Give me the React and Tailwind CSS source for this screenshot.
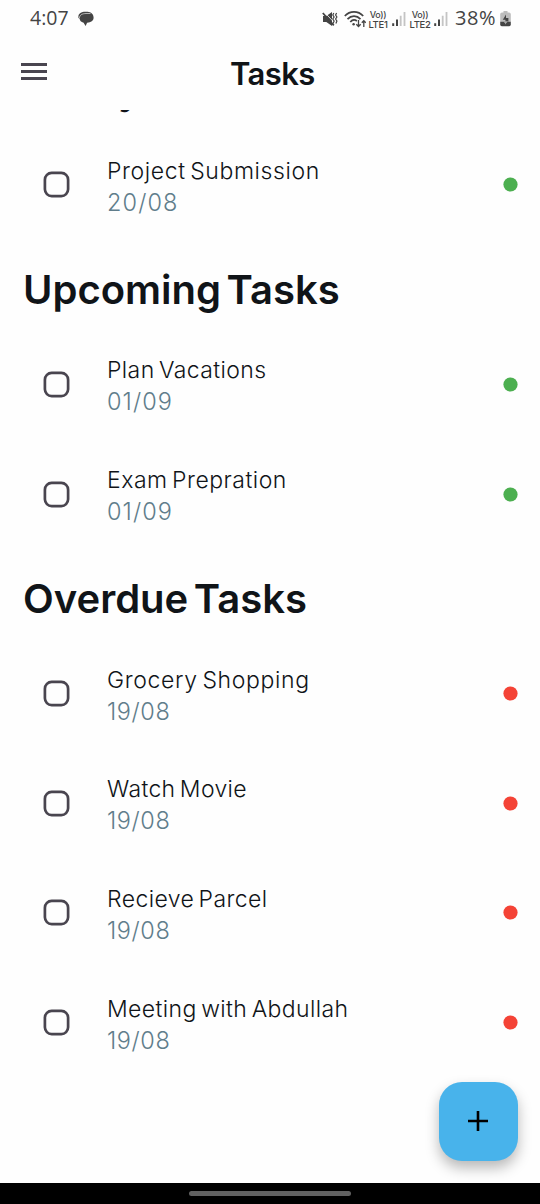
const upcoming = [
  { title: 'Plan Vacations', date: '01/09', tracking: 'tracking-[0.4px]', dateTracking: 'tracking-[1.1px]' },
  { title: 'Exam Prepration', date: '01/09', tracking: 'tracking-[0.5px]', dateTracking: 'tracking-[1.1px]' },
];

const overdue = [
  { title: 'Grocery Shopping', date: '19/08', tracking: 'tracking-[0.65px]', dateTracking: 'tracking-[0.6px]' },
  { title: 'Watch Movie', date: '19/08', tracking: 'tracking-[0.35px]', dateTracking: 'tracking-[0.6px]' },
  { title: 'Recieve Parcel', date: '19/08', tracking: 'tracking-[0.4px]', dateTracking: 'tracking-[0.6px]' },
  { title: 'Meeting with Abdullah', date: '19/08', tracking: 'tracking-[0.4px]', dateTracking: 'tracking-[0.6px]' },
];

function Heading({ children }) {
  return (
    <h2 className="flex h-[89.9px] shrink-0 items-center whitespace-nowrap pl-[23px] pt-[11px] text-[40px] font-semibold leading-none text-[#101418] [word-spacing:-4.5px]">
      {children}
    </h2>
  );
}

function Task({ title, date, tracking, dateTracking, dot }) {
  return (
    <li className="flex h-[109.7px] shrink-0 items-center pl-[43px] pr-[22.5px]">
      <svg className="size-[27px] shrink-0" viewBox="0 0 27 27" fill="none">
        <rect x="1.9" y="1.9" width="23.2" height="23.2" rx="6.8" stroke="#49454f" strokeWidth="2.7" />
      </svg>
      <div className="ml-[37px] flex-1 whitespace-nowrap pt-[4px] text-[23px] font-light leading-[31px]">
        <p className={`text-[#101418] [word-spacing:-2.5px] ${tracking}`}>{title}</p>
        <p className={`text-[23.5px] text-[#607d8b] ${dateTracking}`}>{date}</p>
      </div>
      <svg className="size-[15px] shrink-0" viewBox="0 0 15 15">
        <circle cx="7.5" cy="7.5" r="7.1" className={dot} />
      </svg>
    </li>
  );
}

function Muted() {
  return (
    <svg className="h-[16px] w-[16px]" viewBox="0 0 16 16" fill="none">
      <path d="M1 5h3.3L10 1v14L4.3 11H1z" fill="#444" />
      <path d="M2.6 1.4l9 9.5" stroke="#fefefe" strokeWidth=".8" />
      <path d="M.8 2l11 12.3" stroke="#444" strokeWidth="1.8" />
      <path d="M11.8 2l-1 2 1.3 2-1.3 2 1.3 2-1 2.5M14.6 2l-1 2 1.3 2-1.3 2 1.3 2-1 2.5" stroke="#444" strokeWidth="1.2" />
    </svg>
  );
}

function Wifi() {
  return (
    <svg className="h-[18px] w-[22px]" viewBox="0 0 22 18" fill="none" stroke="#444">
      <path d="M.8 6c5-5.6 13.4-5.6 18.4 0M3.5 9.2c3.8-4 9.2-4 13 0M6.3 12c2-2.3 4.6-2.4 6.6-1" strokeWidth="1.7" />
      <circle cx="9.6" cy="14.2" r="1.2" fill="#444" stroke="none" />
      <path d="M14.5 10v6.2M12.3 14.2l2.2 2.3 2.2-2.3M19.8 17v-6.2M17.8 12.8l2-2.2 2 2.2" strokeWidth="1.3" />
    </svg>
  );
}

function Carrier({ label }) {
  return (
    <span className="flex w-[20px] flex-col items-center gap-[1px] whitespace-nowrap text-[9.5px] font-medium leading-[9px] text-[#444]">
      <span className="text-[9px] tracking-[-0.4px]">Vo))</span>
      <span className="tracking-[-0.3px]">{label}</span>
    </span>
  );
}

function Signal() {
  return (
    <svg className="h-[16px] w-[14px]" viewBox="0 0 14 16">
      <path d="M.2 12.2h2V15h-2zM4 8.5h2V15H4z" fill="#444" />
      <path d="M7.8 4.8h1.8V15H7.8zM11.6 1h1.8v14h-1.8z" fill="#c4c4c4" />
    </svg>
  );
}

function Battery() {
  return (
    <svg className="h-[16px] w-[11px]" viewBox="0 0 11 16">
      <path d="M3.5 0h4v1.5H9A1.8 1.8 0 0 1 10.8 3.3V10H.2V3.3A1.8 1.8 0 0 1 2 1.5h1.5z" fill="#bdbdbd" />
      <path d="M.2 10.5h10.6v3.1a1.6 1.6 0 0 1-1.6 1.6H1.8A1.6 1.6 0 0 1 .2 13.6z" fill="#444" />
      <path d="M6 3.5L2.8 8.7h2.6v1.8h3V7H6z" fill="#444" />
      <path d="M4.2 10.5h3.6L5 13.5v-1.7H4z" fill="#aaa" />
    </svg>
  );
}

export default function App() {
  return (
    <div className="relative flex h-[1204px] w-[540px] flex-col overflow-hidden bg-[#fefefe] font-['Inter',sans-serif]">
      <div className="flex h-[38px] shrink-0 items-center pl-[30px] pr-[29px] text-[#444]">
        <span className="w-[48px] whitespace-nowrap pb-[2px] font-['Open_Sans',sans-serif] text-[19.5px] leading-none">4:07</span>
        <svg className="h-[16px] w-[16px]" viewBox="0 0 16 16">
          <path d="M.4 5.8C.4 2.4 3.4 .8 7.4 .8h2.2C13 .9 15.6 3.4 15.6 6.6c0 3.2-2.7 5-6.5 5.2L7.6 15l-2-3.2C3 11.2 1.8 9.6 1.6 7.6L.4 7z" fill="#444" />
          <path d="M1.4 7C1.6 4 4.2 2.6 8 2.5h4.5" fill="none" stroke="#fefefe" strokeWidth=".6" />
        </svg>
        <div className="ml-auto flex items-center">
          <Muted />
          <span className="ml-[6px] flex"><Wifi /></span>
          <span className="ml-[2px] flex"><Carrier label="LTE1" /></span>
          <span className="ml-[4px] flex"><Signal /></span>
          <span className="ml-[4px] flex"><Carrier label="LTE2" /></span>
          <span className="ml-[4px] flex"><Signal /></span>
          <span className="ml-[7px] w-[42px] whitespace-nowrap pb-[2px] font-['Open_Sans',sans-serif] text-[20px] leading-none tracking-[0.6px]">38%</span>
          <span className="ml-[3px] flex"><Battery /></span>
        </div>
      </div>

      <header className="flex h-[72px] shrink-0 items-start pl-[21px]">
        <div className="mt-[25px] flex w-[26px] flex-col gap-[4.2px]">
          <span className="h-[2.8px] bg-[#49454f]" />
          <span className="h-[2.8px] bg-[#49454f]" />
          <span className="h-[2.8px] bg-[#49454f]" />
        </div>
        <h1 className="ml-[183px] mt-[20px] whitespace-nowrap text-[31px] font-semibold leading-[31px] tracking-[-0.6px] text-[#101418]">Tasks</h1>
      </header>

      <main className="flex min-h-0 flex-1 flex-col overflow-hidden">
        <div className="-mt-[70px] flex flex-col">
          <Heading>Today Tasks</Heading>
          <ul>
            <Task title="Project Submission" date="20/08" tracking="tracking-[0.6px]" dateTracking="tracking-[1.1px]" dot="fill-[#4caf50]" />
          </ul>
          <Heading>Upcoming Tasks</Heading>
          <ul>{upcoming.map((t) => <Task key={t.title} {...t} dot="fill-[#4caf50]" />)}</ul>
          <Heading>Overdue Tasks</Heading>
          <ul>{overdue.map((t) => <Task key={t.title} {...t} dot="fill-[#f44336]" />)}</ul>
        </div>
      </main>

      <button aria-label="Add task" className="absolute right-[22.5px] top-[1081.5px] flex size-[79px] items-center justify-center rounded-[23px] bg-[#48b3eb] shadow-[0_7px_14px_rgba(0,0,0,0.28)]">
        <svg className="size-[20px]" viewBox="0 0 20 20">
          <path d="M10 0v20M0 10h20" stroke="#000" strokeWidth="2.6" />
        </svg>
      </button>

      <div className="flex h-[21px] shrink-0 items-center justify-center bg-black">
        <span className="h-[5px] w-[162px] rounded-full bg-[#616161]" />
      </div>
    </div>
  );
}
